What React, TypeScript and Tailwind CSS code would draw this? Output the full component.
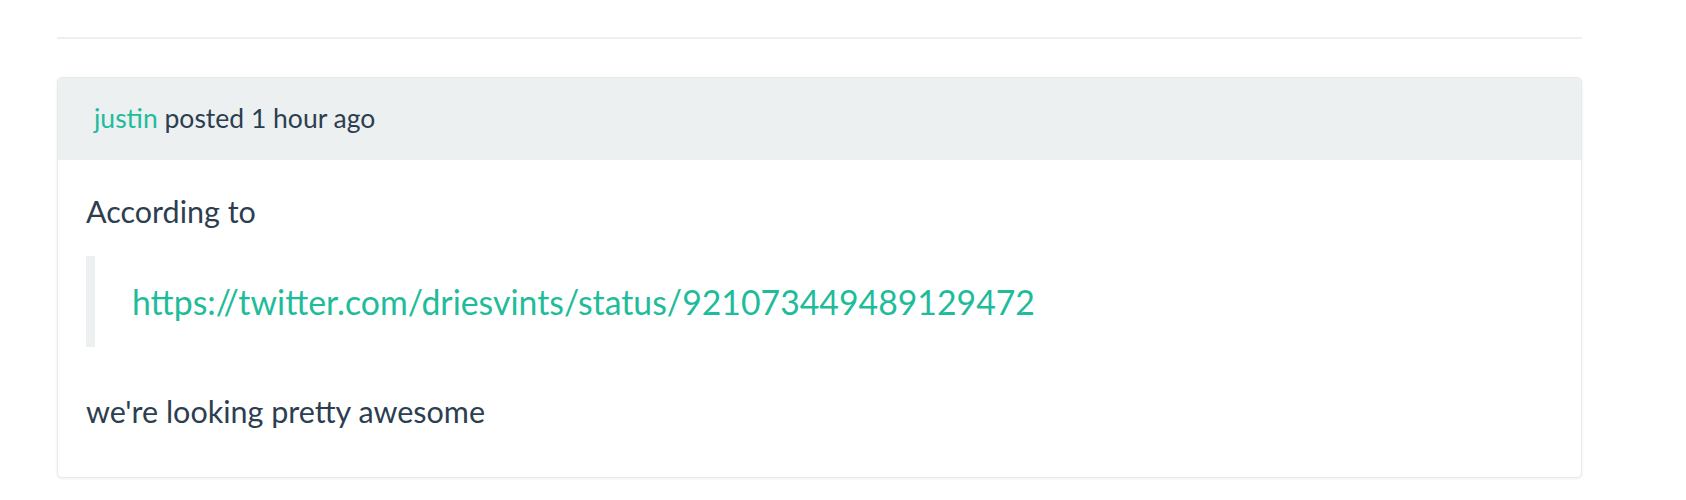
export default function App() {
  return (
    <div className="min-h-screen bg-white font-['Lato','Open_Sans',sans-serif] text-[#2c3e50]">
      <div className="ml-[57px] w-[1525px] pt-[37px]">
        <div className="h-[2px] bg-[#ecf0f1]" />

        <div className="mt-[38px] overflow-hidden rounded-[5px] border border-[#e6eaeb] bg-white shadow-[0_1px_3px_rgba(0,0,0,0.07)]">
          <div className="flex h-[82px] items-center bg-[#ecf0f1] pl-[36px] text-[26.5px]">
            <a href="#" className="text-[#1fbc9b]">
              justin
            </a>
            <span>&nbsp;posted 1 hour ago</span>
          </div>

          <div className="px-[28px] pt-[32px] pb-[47px] text-[30.5px] leading-[38px]">
            <p>According to</p>
            <blockquote className="mt-[26px] flex h-[91px] items-center border-l-[9px] border-[#ecf0f1] pl-[37px] text-[33.8px]">
              <a href="#" className="text-[#1fbc9b]">
                https://twitter.com/driesvints/status/921073449489129472
              </a>
            </blockquote>
            <p className="mt-[45px]">we're looking pretty awesome</p>
          </div>
        </div>
      </div>
    </div>
  );
}
